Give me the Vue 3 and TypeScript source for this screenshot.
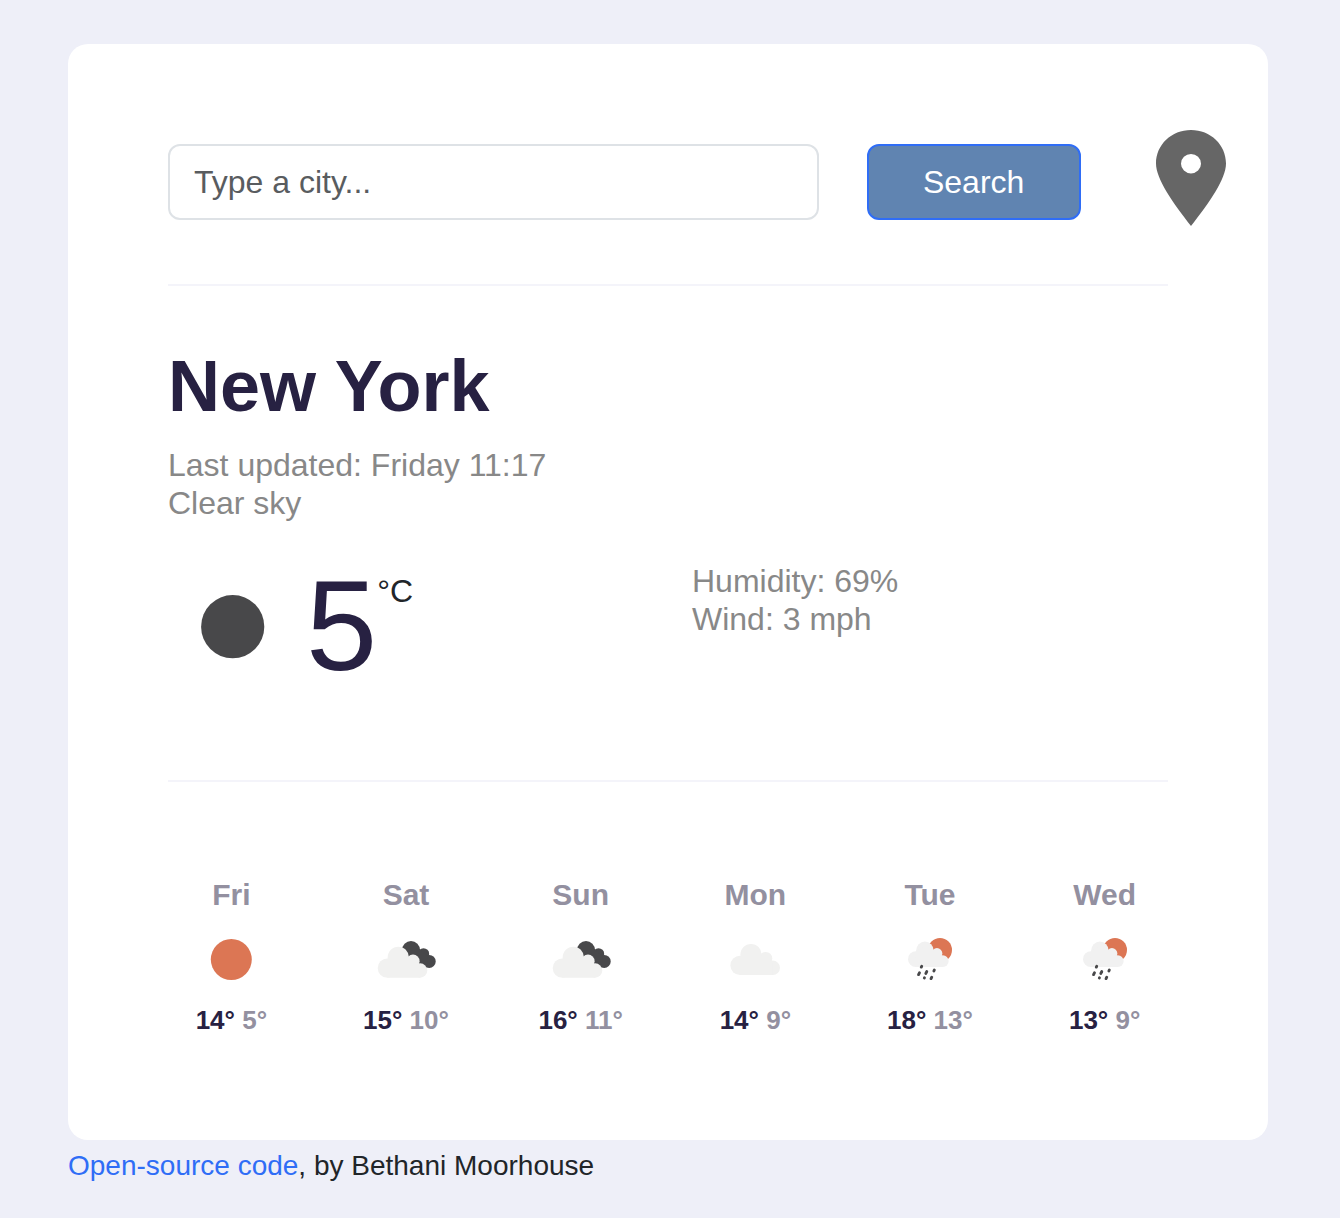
<script setup lang="ts">
import { ref } from 'vue'

type Icon = 'sun' | 'broken' | 'cloud' | 'rain'
interface Day {
  name: string
  icon: Icon
  high: number
  low: number
}

const city = ref('')
const days: Day[] = [
  { name: 'Fri', icon: 'sun', high: 14, low: 5 },
  { name: 'Sat', icon: 'broken', high: 15, low: 10 },
  { name: 'Sun', icon: 'broken', high: 16, low: 11 },
  { name: 'Mon', icon: 'cloud', high: 14, low: 9 },
  { name: 'Tue', icon: 'rain', high: 18, low: 13 },
  { name: 'Wed', icon: 'rain', high: 13, low: 9 },
]
const cloudOffset: Record<Icon, string> = {
  sun: '',
  broken: 'translate(0 0)',
  cloud: 'translate(3.7 -2.7)',
  rain: 'translate(10.2 1.5) scale(.82)',
}
const drops = [
  [41.5, 56.7, 0.4],
  [39, 63.7, 0.9],
  [46.3, 62.5, 0.9],
  [54.1, 60.5, 0.4],
  [44.4, 67.9, 0.05],
  [51.4, 67.9, 0.7],
]
</script>

<template>
  <div class="page">
    <main class="card">
      <form class="search" @submit.prevent>
        <input v-model="city" class="field" type="text" placeholder="Type a city..." />
        <button class="submit" type="submit">Search</button>
        <svg class="pin" viewBox="0 0 70 96" aria-label="Current location">
          <path
            fill="#666"
            fill-rule="evenodd"
            d="M35 0C15.500 0 0 14.800 0 33.500C0 49 17 73 35 96C53 73 70 49 70 33.500C70 14.800 54.500 0 35 0ZM35 24a10 9.700 0 1 1 0 19.400a10 9.700 0 1 1 0-19.400Z"
          />
        </svg>
      </form>

      <hr />

      <h1>New York</h1>
      <div class="details">Last updated: Friday 11:17<br />Clear sky</div>

      <section class="current">
        <div class="reading">
          <svg class="moon" viewBox="0 0 64 64"><circle cx="31.700" cy="31.700" r="31.600" fill="#48484a" /></svg>
          <span class="degrees">5</span>
          <span class="unit">°C</span>
        </div>
        <div class="details">Humidity: 69%<br />Wind: 3 mph</div>
      </section>

      <hr />

      <section class="forecast">
        <div v-for="day in days" :key="day.name" class="day">
          <div class="name">{{ day.name }}</div>
          <svg class="icon" viewBox="0 0 100 100">
            <circle v-if="day.icon === 'sun'" cx="50.300" cy="49.500" r="20.500" fill="#dc7654" />
            <g v-if="day.icon === 'broken'" fill="#48484a">
              <circle cx="55" cy="40" r="9" />
              <circle cx="67.500" cy="43.900" r="5.700" />
              <circle cx="73.200" cy="51.400" r="6.500" />
              <path d="M50 42L62.500 38.500L72 46.500L71 57.500L60 57Z" />
            </g>
            <circle v-if="day.icon === 'rain'" cx="60" cy="40" r="12" fill="#dc7654" />
            <g
              v-if="day.icon !== 'sun'"
              :transform="cloudOffset[day.icon]"
              :fill="day.icon === 'rain' ? '#f1f1f1' : '#f1f1f0'"
            >
              <circle cx="31.300" cy="58.100" r="9.600" />
              <circle cx="42.300" cy="47.300" r="10.600" />
              <circle cx="57" cy="51.200" r="6.600" />
              <circle cx="64.100" cy="60.500" r="7.200" />
              <path d="M31.300 49L42 42L52 47L58 53L64.100 56V67.700H31.300Z" />
            </g>
            <g v-if="day.icon === 'rain'" stroke="#48484a" stroke-width="2.900" stroke-linecap="round">
              <line
                v-for="([x, y, h], i) in drops"
                :key="i"
                :x1="x + h * 0.5"
                :y1="y - h"
                :x2="x - h * 0.5"
                :y2="y + h"
              />
            </g>
          </svg>
          <div class="temps">{{ day.high }}° <span>{{ day.low }}°</span></div>
        </div>
      </section>
    </main>
    <footer><a href="#">Open-source code</a>, by Bethani Moorhouse</footer>
  </div>
</template>

<style>
body {
  margin: 0;
  background: #eeeff8;
}
</style>

<style scoped>
.page {
  box-sizing: border-box;
  width: 1200px;
  margin-left: 68px;
  padding-top: 44px;
  font-family: 'Liberation Sans', Arial, sans-serif;
  color: #212529;
}
.card {
  box-sizing: border-box;
  height: 1096px;
  padding: 100px;
  border-radius: 20px;
  background: #fff;
}
.search {
  display: flex;
  align-items: center;
  width: 1058px;
  height: 76px;
}
.field,
.submit {
  box-sizing: border-box;
  height: 76px;
  border-radius: 12px;
  font: inherit;
  font-size: 32px;
}
.field {
  width: 650.67px;
  padding: 0 24px;
  border: 2px solid #dee2e6;
  background: #fff;
  outline: none;
}
.field::placeholder {
  color: #595c5f;
  opacity: 1;
}
.submit {
  width: 214px;
  margin-left: 48px;
  padding: 0;
  border: 2px solid #2f6df6;
  background: #6084b1;
  color: #fff;
}
.pin {
  flex: none;
  width: 70px;
  height: 96px;
  margin: -8px 0 0 75.300px;
}
hr {
  height: 2px;
  margin: 64px 0 0;
  border: 0;
  background: #f4f4fa;
}
h1 {
  margin: 57px 0 0;
  font-size: 72px;
  line-height: 86px;
  color: #272142;
}
.details {
  font-size: 32px;
  line-height: 38px;
  color: #888;
}
h1 + .details {
  margin-top: 17px;
}
.current {
  display: grid;
  grid-template-columns: 524px 1fr;
  height: 218px;
  margin-top: 40px;
}
.reading {
  display: flex;
  align-items: flex-start;
}
.moon {
  width: 64px;
  height: 64px;
  margin: 33px 41px 0 33px;
}
.degrees {
  font-size: 128px;
  line-height: 128px;
  color: #272142;
}
.unit {
  font-size: 32px;
  line-height: 38px;
  margin-top: 10px;
}
.current + hr {
  margin-top: 0;
}
.forecast {
  display: grid;
  grid-template-columns: repeat(6, 1fr);
  margin: 95px -24px 0;
  text-align: center;
  font-weight: 700;
}
.name {
  font-size: 30px;
  line-height: 36px;
  color: #9390a0;
}
.icon {
  display: block;
  width: 100px;
  height: 100px;
  margin: -3px auto 0;
}
.temps {
  margin-top: -5px;
  font-size: 26px;
  line-height: 30px;
  color: #272142;
}
.temps span {
  color: #9390a0;
}
footer {
  font-size: 28px;
  line-height: 42px;
  margin-top: 5px;
}
footer a {
  color: #2f6df6;
  text-decoration: none;
}
</style>
